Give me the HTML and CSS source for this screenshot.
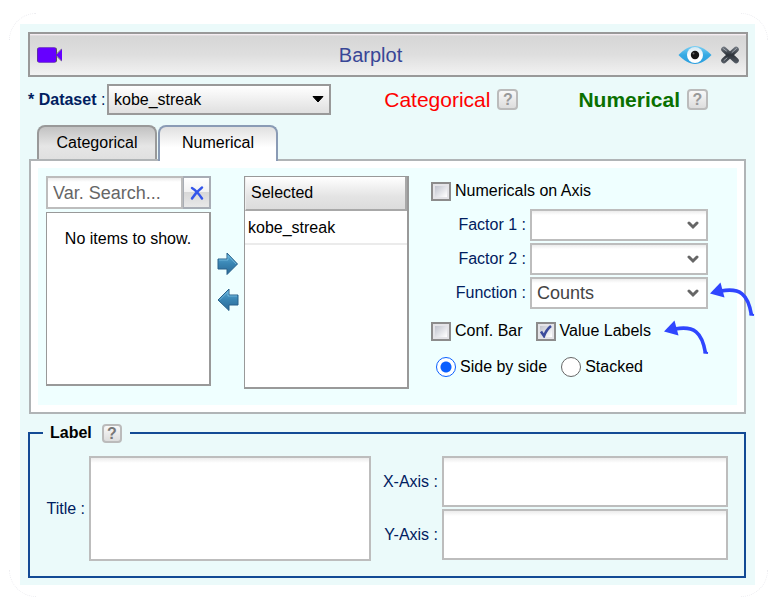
FILE: index.html
```html
<!DOCTYPE html>
<html lang="en">
<head>
<meta charset="utf-8">
<title>Barplot</title>
<link rel="stylesheet" href="styles.css">
</head>
<body>
<div class="card">
<span class="corner corner-tl"></span><span class="corner corner-tr"></span>
<span class="corner corner-bl"></span><span class="corner corner-br"></span>
<main class="panel">
  <header class="titlebar">
    <button class="icon-btn" aria-label="Video"><svg width="26" height="16" viewBox="0 0 26 16"><rect x="0" y="0.500" width="20" height="15" rx="2" fill="#555"/><rect x="0.500" y="0.500" width="18.500" height="15" rx="2" fill="#60f"/><path d="M19 8L25 1.500v13z" fill="#60f"/><path d="M20 6.500L24.500 2M20 9.500l4.500 4.500" stroke="#777" fill="none"/></svg></button>
    <h1>Barplot</h1>
    <button class="icon-btn" aria-label="Preview"><svg width="34" height="20" viewBox="0 0 34 20"><defs><linearGradient id="eye" x1="0" y1="0" x2="0" y2="1"><stop offset="0" stop-color="#7cd0f4"/><stop offset=".5" stop-color="#35a9e3"/><stop offset="1" stop-color="#2b9fdf"/></linearGradient><linearGradient id="white" x1="0" y1="0" x2="0" y2="1"><stop offset="0" stop-color="#d5e8f2"/><stop offset=".6" stop-color="#fff"/></linearGradient></defs><path d="M0.500 10C6 4.500 11 1 17 1s11 3.500 16.500 9C28 15.500 23 19 17 19S6 15.500 0.500 10z" fill="url(#eye)"/><circle cx="17" cy="10" r="8" fill="url(#white)"/><circle cx="17" cy="10" r="4.200" fill="#151515"/><circle cx="15.500" cy="8.500" r="1" fill="#666"/></svg></button>
    <button class="icon-btn" aria-label="Close"><svg width="20" height="20" viewBox="0 0 20 20"><defs><linearGradient id="steel" gradientUnits="userSpaceOnUse" x1="0" y1="1" x2="0" y2="19"><stop offset="0" stop-color="#7b828b"/><stop offset=".5" stop-color="#2c3138"/><stop offset="1" stop-color="#5b626b"/></linearGradient></defs><path d="M4 4.500L16 15.500M16 4.500L4 15.500" stroke="url(#steel)" stroke-width="5.600" stroke-linecap="round"/><path d="M3 3.500L6.500 6M16.500 3.500L12 7.500M4 15.500l3-2.500" stroke="#b4bac1" stroke-width="1" stroke-linecap="round" opacity=".8"/></svg></button>
  </header>

  <div class="dataset-row">
    <label for="dataset"><b>* Dataset</b> :</label>
    <div class="combo dataset">
      <select id="dataset"><option>kobe_streak</option></select>
      <svg class="tri" width="12" height="7" viewBox="0 0 12 7"><path d="M1 .5h10L6 6z" fill="#000" stroke="#000" stroke-linejoin="round"/></svg>
    </div>
    <div class="kinds">
      <span class="kind kind-cat">Categorical <button class="help" aria-label="Help on categorical">?</button></span>
      <span class="kind kind-num">Numerical <button class="help" aria-label="Help on numerical">?</button></span>
    </div>
  </div>

  <div class="tabs" role="tablist">
    <button class="tab" role="tab" aria-selected="false">Categorical</button>
    <button class="tab tab-active" role="tab" aria-selected="true">Numerical</button>
  </div>
  <section class="pane" role="tabpanel">
    <div class="pane-body">
      <div class="source">
        <div class="search">
          <input type="text" placeholder="Var. Search..." aria-label="Variable search">
          <button aria-label="Clear search"><svg width="14" height="14" viewBox="0 0 14 14"><path d="M2 2Q7 5 12 12.500M12 1.500Q6 6 2 12.500" fill="none" stroke="#3355ea" stroke-width="2.400" stroke-linecap="round"/></svg></button>
        </div>
        <div class="list">No items to show.</div>
      </div>
      <div class="movers">
        <button class="icon-btn" aria-label="Add"><svg width="22" height="24" viewBox="0 0 22 24"><defs><linearGradient id="blue" x1="0" y1="0" x2="0" y2="1"><stop offset="0" stop-color="#5daed8"/><stop offset=".5" stop-color="#3985b3"/><stop offset="1" stop-color="#2b6996"/></linearGradient></defs><path d="M1 7h9V1l10.500 11L10 22.500V17H1z" fill="url(#blue)" stroke="#28618a"/><path d="M2 8h9V3.500l8 8.500" fill="none" stroke="#7dc2e3" opacity=".7"/></svg></button>
        <button class="icon-btn" aria-label="Remove"><svg width="22" height="24" viewBox="0 0 22 24"><path d="M21 7h-9V1L1 12l11 10.500V17h9z" fill="url(#blue)" stroke="#28618a"/><path d="M20 8h-9V3.500L2.500 12" fill="none" stroke="#7dc2e3" opacity=".7"/></svg></button>
      </div>
      <table class="selected">
        <thead><tr><th>Selected</th></tr></thead>
        <tbody><tr><td>kobe_streak</td></tr></tbody>
      </table>
      <form class="options">
        <div class="checks"><label><input type="checkbox">Numericals on Axis</label></div>
        <div class="fields">
          <label for="f1">Factor 1 :</label>
          <div class="combo"><select id="f1"><option></option></select><svg class="chev" width="12" height="9" viewBox="0 0 12 9"><path d="M2 2l4 4 4-4" fill="none" stroke="#666" stroke-width="3" stroke-linecap="round"/></svg></div>
          <label for="f2">Factor 2 :</label>
          <div class="combo"><select id="f2"><option></option></select><svg class="chev" width="12" height="9" viewBox="0 0 12 9"><path d="M2 2l4 4 4-4" fill="none" stroke="#666" stroke-width="3" stroke-linecap="round"/></svg></div>
          <label for="fn">Function :</label>
          <div class="combo"><select id="fn"><option>Counts</option></select><svg class="chev" width="12" height="9" viewBox="0 0 12 9"><path d="M2 2l4 4 4-4" fill="none" stroke="#666" stroke-width="3" stroke-linecap="round"/></svg>
            <svg class="pointer" width="46" height="36" viewBox="0 0 46 36"><path d="M1 12.500L11.500 1.500l4 15z" fill="#2f46ff"/><path d="M12 10C31 6.500 39 13 42.500 34" fill="none" stroke="#2f46ff" stroke-width="3.600"/><path d="M40.500 33.500l4.500.5" stroke="#2f46ff" stroke-width="2"/></svg></div>
        </div>
        <div class="checks checks-pair">
          <label><input type="checkbox">Conf. Bar</label>
          <label class="noted"><span class="tick-box"><input type="checkbox" checked><svg class="tick" width="14" height="14" viewBox="0 0 14 14"><path d="M2 7.500L5 12Q7.500 5.500 12 2" fill="none" stroke="#3c4c9c" stroke-width="2.600"/></svg></span>Value Labels
            <svg class="pointer" width="46" height="36" viewBox="0 0 46 36"><path d="M1 12.500L11.500 1.500l4 15z" fill="#2f46ff"/><path d="M12 10C31 6.500 39 13 42.500 34" fill="none" stroke="#2f46ff" stroke-width="3.600"/><path d="M40.500 33.500l4.500.5" stroke="#2f46ff" stroke-width="2"/></svg></label>
        </div>
        <div class="radios">
          <label><input type="radio" name="layout" checked>Side by side</label>
          <label><input type="radio" name="layout">Stacked</label>
        </div>
      </form>
    </div>
  </section>

  <fieldset class="labels">
    <legend>Label <button class="help" aria-label="Help on labels">?</button></legend>
    <div class="labels-body">
      <label for="title">Title :</label>
      <textarea id="title"></textarea>
      <div class="axes">
        <label for="xaxis">X-Axis :</label><textarea id="xaxis"></textarea>
        <label for="yaxis">Y-Axis :</label><textarea id="yaxis"></textarea>
      </div>
    </div>
  </fieldset>
</main>
</div>
</body>
</html>
```
FILE: styles.css
```css
* { box-sizing: border-box; }
body {
  margin: 0;
  background: #fff;
  color: #000;
  font: 16px/20px "Liberation Sans", Arial, sans-serif;
}
button, input, select, textarea { font: inherit; color: inherit; margin: 0; border-radius: 0; }
svg { display: block; }
.card { position: relative; margin: 13px 9px 0; padding: 11px 13px 12px 11px; }
.corner { position: absolute; width: 27px; height: 27px; border: 0 dotted #ececf0; }
.corner-tl { top: 0; left: 0; border-width: 1px 0 0 1px; border-top-left-radius: 27px; }
.corner-tr { top: 0; right: 0; border-width: 1px 1px 0 0; border-top-right-radius: 27px; }
.corner-bl { bottom: 0; left: 0; border-width: 0 0 1px 1px; border-bottom-left-radius: 27px; }
.corner-br { bottom: 0; right: 0; border-width: 0 1px 1px 0; border-bottom-right-radius: 27px; }
.panel { position: relative; background: #ebfafa; padding: 8px 7px 7px 8px; }

.icon-btn { padding: 0; border: 0; background: none; flex: none; }
.titlebar {
  display: flex;
  align-items: center;
  gap: 8px;
  height: 45px;
  padding: 0 6px 0 7px;
  border: 2px solid #999;
  background: linear-gradient(#fff4fb 0, #d6d6d6 2px, #dedede 50%, #f2f2f2);
}
.titlebar h1 { flex: 1; margin: 0; text-align: center; font-size: 20px; font-weight: 400; color: #384696; }

.dataset-row { display: flex; align-items: center; height: 31px; margin-top: 7px; }
.dataset-row > label { width: 79px; color: #002060; white-space: nowrap; }
.combo { position: relative; }
.combo select {
  display: block;
  width: 100%;
  height: 32px;
  padding: 0 24px 0 5px;
  appearance: none;
  border: 2px solid #bdbdbd;
  background: linear-gradient(#ececec, #fff 4px);
  color: #444;
  font-size: 18px;
}
.combo .chev { position: absolute; right: 9px; top: 12px; }
.combo.dataset { flex: 1; min-width: 160px; }
.combo.dataset select { height: 31px; border-color: #999; background: linear-gradient(#fff, #e0e0e0); color: #000; font-size: 16px; }
.combo .tri { position: absolute; right: 7px; top: 12px; }
.kinds { display: flex; gap: 60px; padding: 0 40px 0 53px; }
.kind { display: flex; align-items: center; gap: 7px; font-size: 21px; line-height: 24px; }
.kind-cat { color: #f00; }
.kind-num { color: #0a7000; font-weight: 700; }
.help {
  width: 21px;
  height: 21px;
  padding: 0;
  border: 2px solid #bbb;
  border-radius: 4px;
  background: linear-gradient(#f8f8f8, #ddd);
  color: #999;
  font-size: 16px;
  font-weight: 700;
  line-height: 17px;
  text-align: center;
}

.tabs { position: relative; z-index: 1; display: flex; gap: 1px; margin: 10px 0 0 9px; }
.tab {
  width: 120px;
  height: 36px;
  padding: 0 0 2px;
  border: 2px solid #999;
  border-bottom: 0;
  border-radius: 8px 8px 0 0;
  background: linear-gradient(#c2c2c2, #e6e6e6 60%, #e0e0e0);
  line-height: 20px;
}
.tab:not(.tab-active) { height: 34px; padding: 0; }
.tab-active { border-color: #8a9bb5; background: linear-gradient(#e0e0e0, #fff 60%); }
.pane { margin: -2px 2px 0 1px; padding: 7px; border: 2px solid #b0b4b6; background: #fff; }
.pane-body {
  display: grid;
  grid-template-columns: minmax(165px, 165fr) 33px minmax(165px, 165fr) minmax(321px, 321fr);
  height: 237px;
  padding: 8px;
  background: #efffff;
}
.search { display: flex; height: 33px; }
.search input {
  flex: 1;
  min-width: 0;
  padding: 0 5px;
  border: 2px solid #bdbdbd;
  background: linear-gradient(#ececec, #fff 4px);
  font-size: 18px;
}
.search input::placeholder { color: #666; opacity: 1; }
.search button {
  display: grid;
  place-items: center;
  width: 28px;
  padding: 0;
  border: 2px solid #a8adb5;
  border-left-width: 1px;
  background: linear-gradient(#fff, #f2f2f2 48%, #d8d8d8 50%, #e8e8e8);
}
.list {
  height: 174px;
  margin-top: 3px;
  padding-top: 16px;
  border: 1px solid #999;
  border-width: 1px 2px 2px 1px;
  background: #fff;
  text-align: center;
}
.movers { display: flex; flex-direction: column; align-items: center; gap: 12px; padding-top: 76px; }
.selected {
  display: block;
  height: 213px;
  border: 1px solid #999;
  border-width: 1px 2px 2px 1px;
  border-spacing: 0;
  background: #fff;
}
.selected thead, .selected tbody, .selected tr, .selected th, .selected td { display: block; }
.selected th {
  height: 34px;
  padding: 6px 5px;
  border: 2px solid #a8a8a8;
  border-width: 0 2px 2px 1px;
  border-left-color: #eee;
  background: linear-gradient(#fff, #e4e4e4 60%, #dcdcdc);
  font-weight: 400;
  text-align: left;
}
.selected td { height: 34px; padding: 7px 3px; border-bottom: 2px solid #ebebeb; }

.options { padding: 4px 22px 0; }
.options input { appearance: none; flex: none; width: 20px; height: 20px; }
.options input[type="checkbox"] {
  height: 19px;
  border: 2px solid #8c8c8c;
  background: linear-gradient(135deg, #b4b8c4, #fff 85%);
  box-shadow: inset 0 0 0 2px #e4e4e8;
}
.checks, .radios { display: flex; height: 22px; }
.checks label, .radios label { display: flex; align-items: center; gap: 4px; white-space: nowrap; }
.fields {
  display: grid;
  grid-template-columns: 95px 1fr;
  gap: 2px 4px;
  align-items: center;
  margin: 7px 0 11px;
}
.fields label, .labels label { color: #002060; text-align: right; white-space: nowrap; }
.checks-pair { gap: 13px; }
.noted, .tick-box { position: relative; display: flex; }
.tick { position: absolute; left: 3px; top: 2px; }
.pointer { position: absolute; }
.combo .pointer { left: calc(100% + 1px); top: 4px; }
.noted .pointer { left: calc(100% + 12px); top: -1px; }
.radios { gap: 14px; margin: 14px 0 0 5px; }
.radios input { border: 1px solid #666; border-radius: 50%; background: #fff; }
.radios input:checked { border-color: #0a5fff; background: radial-gradient(circle, #0a5fff 5px, #fff 6px); }

.labels { min-width: 0; margin: 9px 2px 0 0; padding: 13px 16px 15px; border: 2px solid #134a95; }
.labels legend { display: flex; align-items: center; gap: 10px; height: 20px; margin-left: -3px; padding: 0 8px 0 7px; font-weight: 700; }
.labels .help { width: 20px; height: 19px; color: #777; line-height: 15px; }
.labels-body { display: grid; grid-template-columns: 39px 282fr 353fr; column-gap: 4px; align-items: center; }
.labels textarea {
  display: block;
  width: 100%;
  height: 51px;
  resize: none;
  border: 2px solid #bdbdbd;
  background: linear-gradient(#ececec, #fff 5px);
}
.labels #title { height: 105px; }
.axes { display: grid; grid-template-columns: 63px 1fr; gap: 2px 4px; align-items: center; align-self: start; }
```
